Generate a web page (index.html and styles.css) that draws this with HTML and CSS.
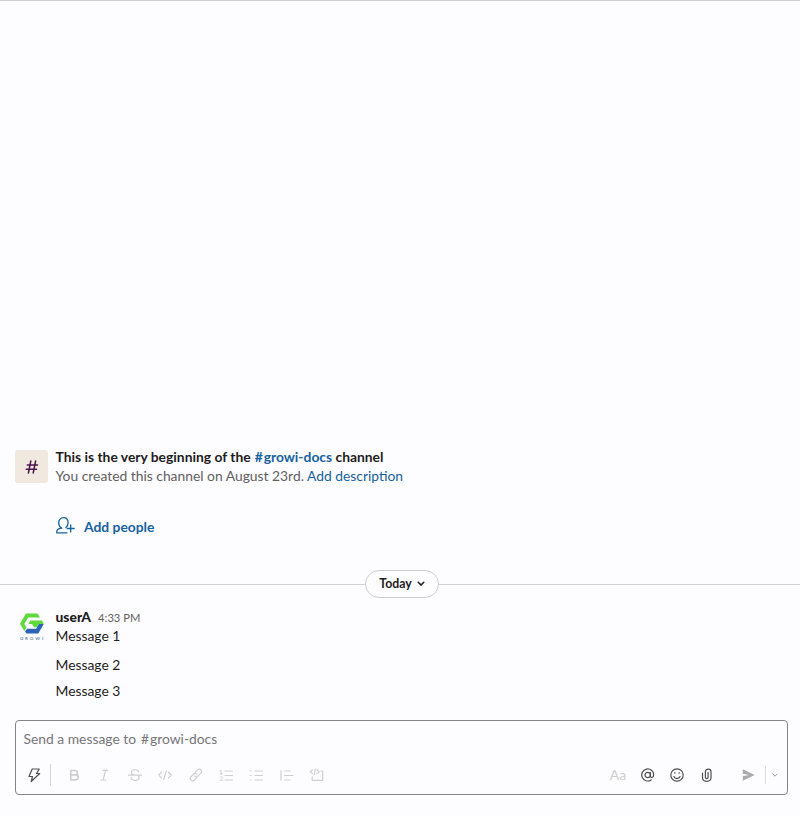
FILE: index.html
```html
<!DOCTYPE html>
<html lang="en">
<head>
<meta charset="utf-8">
<title>growi-docs</title>
<link rel="stylesheet" href="styles.css">
</head>
<body>
<main class="channel">
  <section class="intro">
    <div class="hash-tile"><svg width="14" height="16" viewBox="0 0 14 16"><path d="M5.800 2 3.400 14M10.600 2 8.200 14M2.300 5.900h10.200M1.300 10.300h10.200"/></svg></div>
    <div class="intro-text">
      <h1>This is the very beginning of the <a class="chan"><span>#</span>growi-docs</a> channel</h1>
      <p>You created this channel on August 23rd. <a>Add description</a></p>
      <a class="add-people">
        <svg width="20" height="20" viewBox="0 0 20 20"><path d="M11 16.800H.8c-.5-2.900 1.300-4.300 4.900-4.700C3.700 10.900 2.700 9.200 2.700 6.900 2.700 3.800 4.600 1.700 7.400 1.700s4.700 2.100 4.700 5.200c0 1.900-.9 3.500-2.200 4.600M14.700 9v7M11.200 12.500h7"/></svg>
        <span>Add people</span>
      </a>
    </div>
  </section>

  <div class="divider"><button class="today"><span>Today</span><svg width="8" height="6" viewBox="0 0 8 6"><path d="m1.200 1.200 2.800 2.900 2.800-2.900"/></svg></button></div>

  <section class="messages">
    <div class="avatar">
      <svg width="24" height="21" viewBox="0 0 24 21">
        <path fill="#5fd93b" d="M6 .5h11.500l2.500 4H8.300L4.300 11 6.500 14.500 4.300 18 0 10.700z"/>
        <path fill="#5fd93b" d="M10.300 7.500H22l1.700 3.500h-4.700l-2 3.300h-3L12 11H8.400z"/>
        <path fill="#2c63b5" d="M19 11h4.800l-5.500 9.500H6.300L5 18.300l2.200-2.500h8.900z"/>
      </svg>
      <span>GROWI</span>
    </div>
    <div class="message-list">
      <div class="byline"><b>userA</b><time>4:33 PM</time></div>
      <p>Message 1</p>
      <p>Message 2</p>
      <p>Message 3</p>
    </div>
  </section>

  <section class="composer">
    <div class="placeholder">Send a message to <span class="target"><span>#</span>growi-docs</span></div>
    <div class="toolbar">
      <div class="shortcut"><svg class="icon dark" viewBox="0 0 20 20"><path d="M8.200 4h7l-2.600 4.500h3.100L7.200 16.500 8.500 11.500H5z"/></svg></div>
      <div class="format">
        <svg class="icon" viewBox="0 0 20 20"><path class="heavy" d="M6.800 5.500h4c3.500 0 3.500 4.400 0 4.400h-4zM6.800 9.900h4.600c3.800 0 3.800 4.900 0 4.900H6.800z"/></svg>
        <svg class="icon" viewBox="0 0 20 20"><path d="M8.800 5.300h5M6.700 15h5M11.500 5.300 9.100 15"/></svg>
        <svg class="icon" viewBox="0 0 20 20"><path d="M3.500 10.200h13M13.700 7C13 3.900 6.300 4 6.400 7.400c0 1.400 1 2.200 2.900 2.700M6 12.500c.6 3.800 8 3.800 8 .2 0-1-.5-1.800-1.500-2.400"/></svg>
        <svg class="icon" viewBox="0 0 20 20"><path d="M6.600 7.200 3.700 10l2.900 2.900M13.400 7.200l2.900 2.800-2.900 2.900M11.300 5.800 8.700 14.500"/></svg>
        <svg class="icon" viewBox="0 0 20 20"><path d="m9.300 7.100 2-2c2.500-2.300 5.700.8 3.500 3.200l-2.600 2.600c-1 1-2.500 1-3.500 0M10.400 13l-2 2C5.900 17.200 2.800 14.100 5 11.800l2.600-2.600c1-1 2.500-1 3.500 0"/></svg>
        <svg class="icon" viewBox="0 0 20 20"><path d="M9 6h7.500M9 10.500h7.500M9 15h7.500"/><path class="fine" d="m4 6 1.200-.7v3.600M4 8.900h2.400M4 12.100c1-.8 2.200-.2 2.200.6 0 1-1.600 1.900-2.300 2.700h2.500"/></svg>
        <svg class="icon" viewBox="0 0 20 20"><path d="M9 6h7.500M9 10.500h7.500M9 15h7.500M4.200 6h1M4.200 10.500h1M4.200 15h1"/></svg>
        <svg class="icon" viewBox="0 0 20 20"><path d="M4 5.500v9.500M7.500 6H13M7.500 10.500h8.500M7.500 15H13"/></svg>
        <svg class="icon" viewBox="0 0 20 20"><path d="M14 6h1.700v9.300H5.200v-3.500"/><path d="M5.500 4.800 3.300 6.700l2.200 1.900M9.900 4.800l2.200 1.900-2.200 1.900M8.300 4 7.300 9.300"/></svg>
      </div>
      <div class="extras">
        <span class="aa">Aa</span>
        <svg class="icon dark" viewBox="0 0 20 20"><circle cx="9.700" cy="10" r="2.700"/><path d="M12.400 7.500v3.300c0 2.500 3.300 2.200 3.300-.8a6 6 0 1 0-2.600 4.900"/></svg>
        <svg class="icon dark" viewBox="0 0 20 20"><circle cx="10" cy="10" r="6.200"/><path d="M6.900 11.500c1 2.700 5.200 2.700 6.200 0"/><path d="M7.900 7.700v.5M12.100 7.700v.5"/></svg>
        <svg class="icon dark" viewBox="0 0 20 20"><path d="M5.500 8v4.800c0 4.700 8.500 4.700 8.500 0V6.500c0-3.300-5.600-3.300-5.600 0v5.700c0 1.800 2.700 1.800 2.700 0V7.300"/></svg>
      </div>
      <svg class="send" width="13" height="12" viewBox="0 0 13 12"><path d="M.8.300 12.700 6 .8 11.700V7.300L7 6 .8 4.700z"/></svg>
      <div class="send-options"><svg width="6" height="5" viewBox="0 0 6 5"><path d="m.8 1 2.200 2.200L5.200 1"/></svg></div>
    </div>
  </section>
</main>
</body>
</html>
```

FILE: styles.css
```css
* { box-sizing: border-box; }
body { margin: 0; background: #fdfcfe; color: #1d1c1d; font: 13.850px/20px Lato, sans-serif; }
h1, p { margin: 0; font-size: 13.850px; }
a { color: #1762a0; }
svg { flex: none; fill: none; stroke: currentColor; stroke-linecap: round; stroke-linejoin: round; }
.channel { height: 816px; display: flex; flex-direction: column; justify-content: flex-end; padding-bottom: 21px; border-top: 1px solid #d0d0d0; }

.intro { display: flex; gap: 7.500px; padding-left: 15px; height: 123px; }
.hash-tile { width: 33px; height: 33px; margin-top: 3px; border-radius: 3px; background: #f1e8e0; color: #4a154b; display: flex; align-items: center; justify-content: center; }
.hash-tile svg { stroke-width: 1.500; }
.intro-text h1 { line-height: 20px; font-weight: 700; white-space: pre; }
.intro-text p { color: #616061; line-height: 18px; }
.chan { margin-left: .7px; }
.chan span, .target span { margin-right: .9px; }
.add-people { display: flex; align-items: center; gap: 8.500px; margin-top: 32px; font-weight: 700; }
.add-people svg { stroke-width: 1.300; margin-top: -2px; }

.divider { display: flex; align-items: center; height: 28px; }
.divider::before, .divider::after { content: ""; flex: 1; height: 1px; background: #d2d1d3; }
.divider::before { flex: 0 0 365px; }
.today { width: 74px; height: 28px; display: flex; align-items: center; justify-content: center; gap: 5px; padding: 0; border: 1px solid #cccbcd; border-radius: 14px; background: #fefdff; color: #1d1c1d; font: 700 12.300px/20px Lato, sans-serif; }
.today svg { stroke-width: 1.500; }

.messages { display: flex; height: 122px; padding: 9px 0 0 15px; }
.avatar { width: 33px; height: 33px; margin: 6px 7.500px 0 0; display: flex; flex-direction: column; align-items: center; }
.avatar svg { stroke: none; }
.avatar span { color: #6685a3; font: 700 4.500px/8px Lato, sans-serif; letter-spacing: 1.900px; margin: 1px -2px 0 0; }
.byline { display: flex; align-items: baseline; gap: 7px; height: 19px; }
.byline b { font-weight: 900; }
.byline time { color: #616061; font-size: 11.200px; }
.message-list p { height: 19px; line-height: 19px; }
.message-list p + p { margin-top: 10px; }
.message-list p:last-child { margin-top: 7px; }

.composer { margin: 0 12px 0 15px; height: 75px; border: 1px solid #858486; border-radius: 4px; display: flex; flex-direction: column; justify-content: space-between; }
.placeholder { padding: 8px 0 0 7.500px; color: #777678; }
.target { margin-left: 1.500px; }
.toolbar { display: flex; align-items: center; height: 38px; color: #cfced0; }
.icon { width: 20px; height: 20px; stroke-width: 1.200; }
.icon .heavy { stroke-width: 1.700; }
.icon .fine { stroke-width: .9; }
.icon.dark { color: #4f4e50; }
.shortcut { width: 35px; height: 22px; padding: 1px 0 0 8px; border-right: 1px solid #d5d4d6; }
.format { display: flex; gap: 10.400px; margin-left: 13px; }
.extras { display: flex; align-items: center; gap: 9.600px; margin-left: auto; }
.aa { width: 20px; text-align: center; font-size: 14px; }
.send { margin-left: 25px; fill: #aaa9ab; stroke: none; }
.send-options { height: 18px; width: 22.300px; margin-left: 10px; border-left: 1px solid #dddcdf; display: flex; align-items: center; padding-left: 6px; color: #969597; }
```
